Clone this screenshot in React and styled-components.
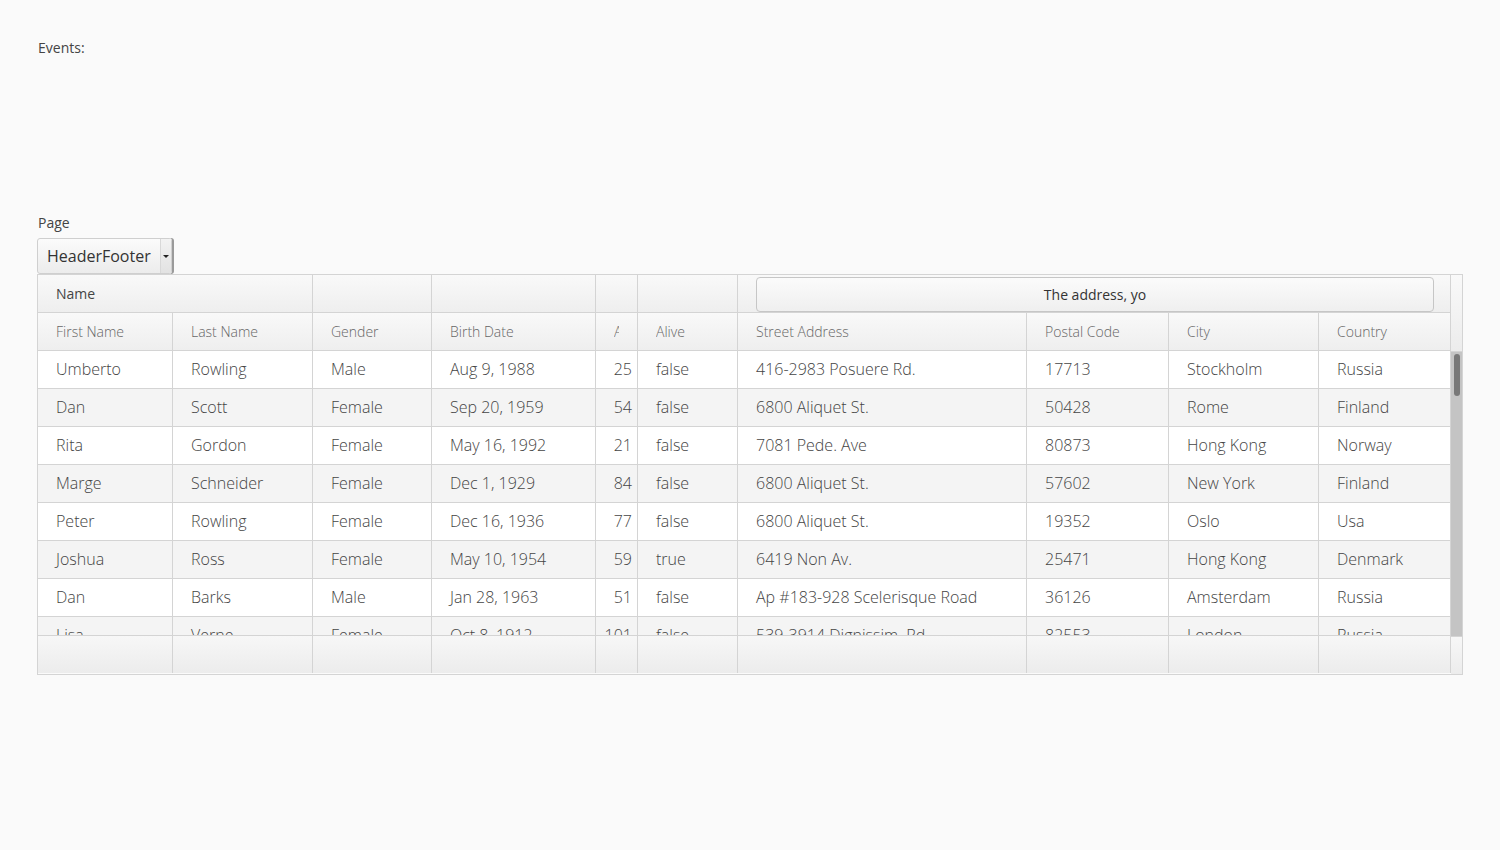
import styled, { createGlobalStyle } from "styled-components";

const columns = [
  { key: "first", label: "First Name", width: 135 },
  { key: "last", label: "Last Name", width: 140 },
  { key: "gender", label: "Gender", width: 119 },
  { key: "birth", label: "Birth Date", width: 164 },
  { key: "age", label: "Age", width: 42, right: true },
  { key: "alive", label: "Alive", width: 100 },
  { key: "street", label: "Street Address", width: 289 },
  { key: "postal", label: "Postal Code", width: 142 },
  { key: "city", label: "City", width: 150 },
  { key: "country", label: "Country", width: 132 },
];

const template = columns.map((c) => `${c.width}px`).join(" ");

const people = [
  ["Umberto", "Rowling", "Male", "Aug 9, 1988", "25", "false", "416-2983 Posuere Rd.", "17713", "Stockholm", "Russia"],
  ["Dan", "Scott", "Female", "Sep 20, 1959", "54", "false", "6800 Aliquet St.", "50428", "Rome", "Finland"],
  ["Rita", "Gordon", "Female", "May 16, 1992", "21", "false", "7081 Pede. Ave", "80873", "Hong Kong", "Norway"],
  ["Marge", "Schneider", "Female", "Dec 1, 1929", "84", "false", "6800 Aliquet St.", "57602", "New York", "Finland"],
  ["Peter", "Rowling", "Female", "Dec 16, 1936", "77", "false", "6800 Aliquet St.", "19352", "Oslo", "Usa"],
  ["Joshua", "Ross", "Female", "May 10, 1954", "59", "true", "6419 Non Av.", "25471", "Hong Kong", "Denmark"],
  ["Dan", "Barks", "Male", "Jan 28, 1963", "51", "false", "Ap #183-928 Scelerisque Road", "36126", "Amsterdam", "Russia"],
  ["Lisa", "Verne", "Female", "Oct 8, 1912", "101", "false", "539-3914 Dignissim. Rd.", "82553", "London", "Russia"],
];

const GlobalStyle = createGlobalStyle`
  body {
    margin: 0;
    background: #fafafa;
    font-family: "Open Sans", "Liberation Sans", sans-serif;
    color: #444;
  }
`;

const Page = styled.div`
  padding: 39px 37px 0 37px;
`;

const Label = styled.div`
  padding-left: 1px;
  font-size: 14px;
  line-height: 18px;
  color: #444;
`;

const EventsLog = styled.div`
  height: 157px;
`;

const Select = styled.div`
  margin-top: 6px;
  display: inline-flex;
  align-items: stretch;
  width: 135px;
  height: 36px;
  box-sizing: border-box;
  border: 1px solid #cfcfcf;
  border-radius: 3px;
  background: linear-gradient(#fbfbfb, #ececec);
  box-shadow: 2px 0 0 #9a9a9a;
`;

const SelectText = styled.span`
  flex: 1;
  padding-left: 9px;
  font-size: 16px;
  line-height: 34px;
  color: #333;
`;

const SelectArrow = styled.span`
  width: 10px;
  display: flex;
  align-items: center;
  justify-content: center;
  border-left: 1px solid #d8d8d8;
  background: linear-gradient(#f2f2f2, #e2e2e2);
  &::after {
    content: "";
    border-left: 3px solid transparent;
    border-right: 3px solid transparent;
    border-top: 3px solid #222;
  }
`;

const Table = styled.div`
  width: 1426px;
  box-sizing: border-box;
  border: 1px solid #d4d4d4;
  display: flex;
`;

const Main = styled.div`
  display: flex;
  flex-direction: column;
`;

const Side = styled.div`
  width: 11px;
  display: flex;
  flex-direction: column;
`;

const Corner = styled.div`
  height: 76px;
  border-bottom: 1px solid #d4d4d4;
  background: linear-gradient(#f9f9f9, #ececec);
`;

const Track = styled.div`
  height: 284px;
  background: #c4c4c4;
  padding: 2px 2px 0 2px;
  box-sizing: border-box;
`;

const Thumb = styled.div`
  height: 42px;
  width: 6px;
  margin-left: 1px;
  border-radius: 3px;
  background: #787878;
`;

const FooterCorner = styled.div`
  height: 37px;
  border-top: 1px solid #d4d4d4;
  background: linear-gradient(#f7f7f7, #ececec);
`;

const HeaderRow = styled.div`
  display: grid;
  grid-template-columns: ${template};
  height: 38px;
  background: linear-gradient(#f9f9f9, #eeeeee);
`;

const GroupCell = styled.div`
  grid-column: span ${(p) => p.$span || 1};
  box-sizing: border-box;
  border-right: 1px solid #d4d4d4;
  border-bottom: 1px solid #d4d4d4;
  padding: ${(p) => (p.$field ? "2px 16px 0 18px" : "0 18px")};
  font-size: 14px;
  line-height: 37px;
  color: #444;
  display: flex;
  align-items: ${(p) => (p.$field ? "stretch" : "center")};
`;

const HeaderField = styled.div`
  flex: 1;
  box-sizing: border-box;
  border: 1px solid #c6c6c6;
  border-radius: 4px;
  background: linear-gradient(#fbfbfb, #efefef);
  text-align: center;
  font-size: 14px;
  line-height: 33px;
  color: #333;
`;

const HeadCell = styled.div`
  box-sizing: border-box;
  border-right: 1px solid #d4d4d4;
  border-bottom: 1px solid #d4d4d4;
  padding: 0 18px;
  font-size: 14px;
  font-weight: 300;
  line-height: 37px;
  color: #666;
  overflow: hidden;
  white-space: nowrap;
`;

const Clip = styled.span`
  display: block;
  overflow: hidden;
`;

const Body = styled.div`
  height: 284px;
  overflow: hidden;
`;

const Row = styled.div`
  display: grid;
  grid-template-columns: ${template};
  height: 38px;
  background: ${(p) => (p.$odd ? "#f4f4f4" : "#ffffff")};
`;

const Cell = styled.div`
  box-sizing: border-box;
  border-right: 1px solid #d4d4d4;
  border-bottom: 1px solid #d4d4d4;
  padding: ${(p) => (p.$right ? "0 5px 0 0" : "0 18px")};
  text-align: ${(p) => (p.$right ? "right" : "left")};
  font-size: 16px;
  font-weight: 300;
  line-height: 37px;
  color: #444;
  white-space: nowrap;
  overflow: hidden;
`;

const FooterRow = styled.div`
  display: grid;
  grid-template-columns: ${template};
  height: 38px;
  border-top: 1px solid #d4d4d4;
  box-sizing: border-box;
  background: linear-gradient(#f7f7f7, #ececec);
`;

const FooterCell = styled.div`
  border-right: 1px solid #d4d4d4;
`;

export default function App() {
  return (
    <>
      <GlobalStyle />
      <Page>
        <Label>Events:</Label>
        <EventsLog />
        <Label>Page</Label>
        <Select>
          <SelectText>HeaderFooter</SelectText>
          <SelectArrow />
        </Select>
        <Table>
          <Main>
            <HeaderRow>
              <GroupCell $span={2}>Name</GroupCell>
              <GroupCell />
              <GroupCell />
              <GroupCell />
              <GroupCell />
              <GroupCell $span={4} $field>
                <HeaderField>The address, yo</HeaderField>
              </GroupCell>
            </HeaderRow>
            <HeaderRow>
              {columns.map((c) => (
                <HeadCell key={c.key}>
                  <Clip>{c.label}</Clip>
                </HeadCell>
              ))}
            </HeaderRow>
            <Body>
              {people.map((p, i) => (
                <Row key={i} $odd={i % 2 === 1}>
                  {p.map((v, j) => (
                    <Cell key={j} $right={columns[j].right}>
                      {v}
                    </Cell>
                  ))}
                </Row>
              ))}
            </Body>
            <FooterRow>
              {columns.map((c) => (
                <FooterCell key={c.key} />
              ))}
            </FooterRow>
          </Main>
          <Side>
            <Corner />
            <Track>
              <Thumb />
            </Track>
            <FooterCorner />
          </Side>
        </Table>
      </Page>
    </>
  );
}
